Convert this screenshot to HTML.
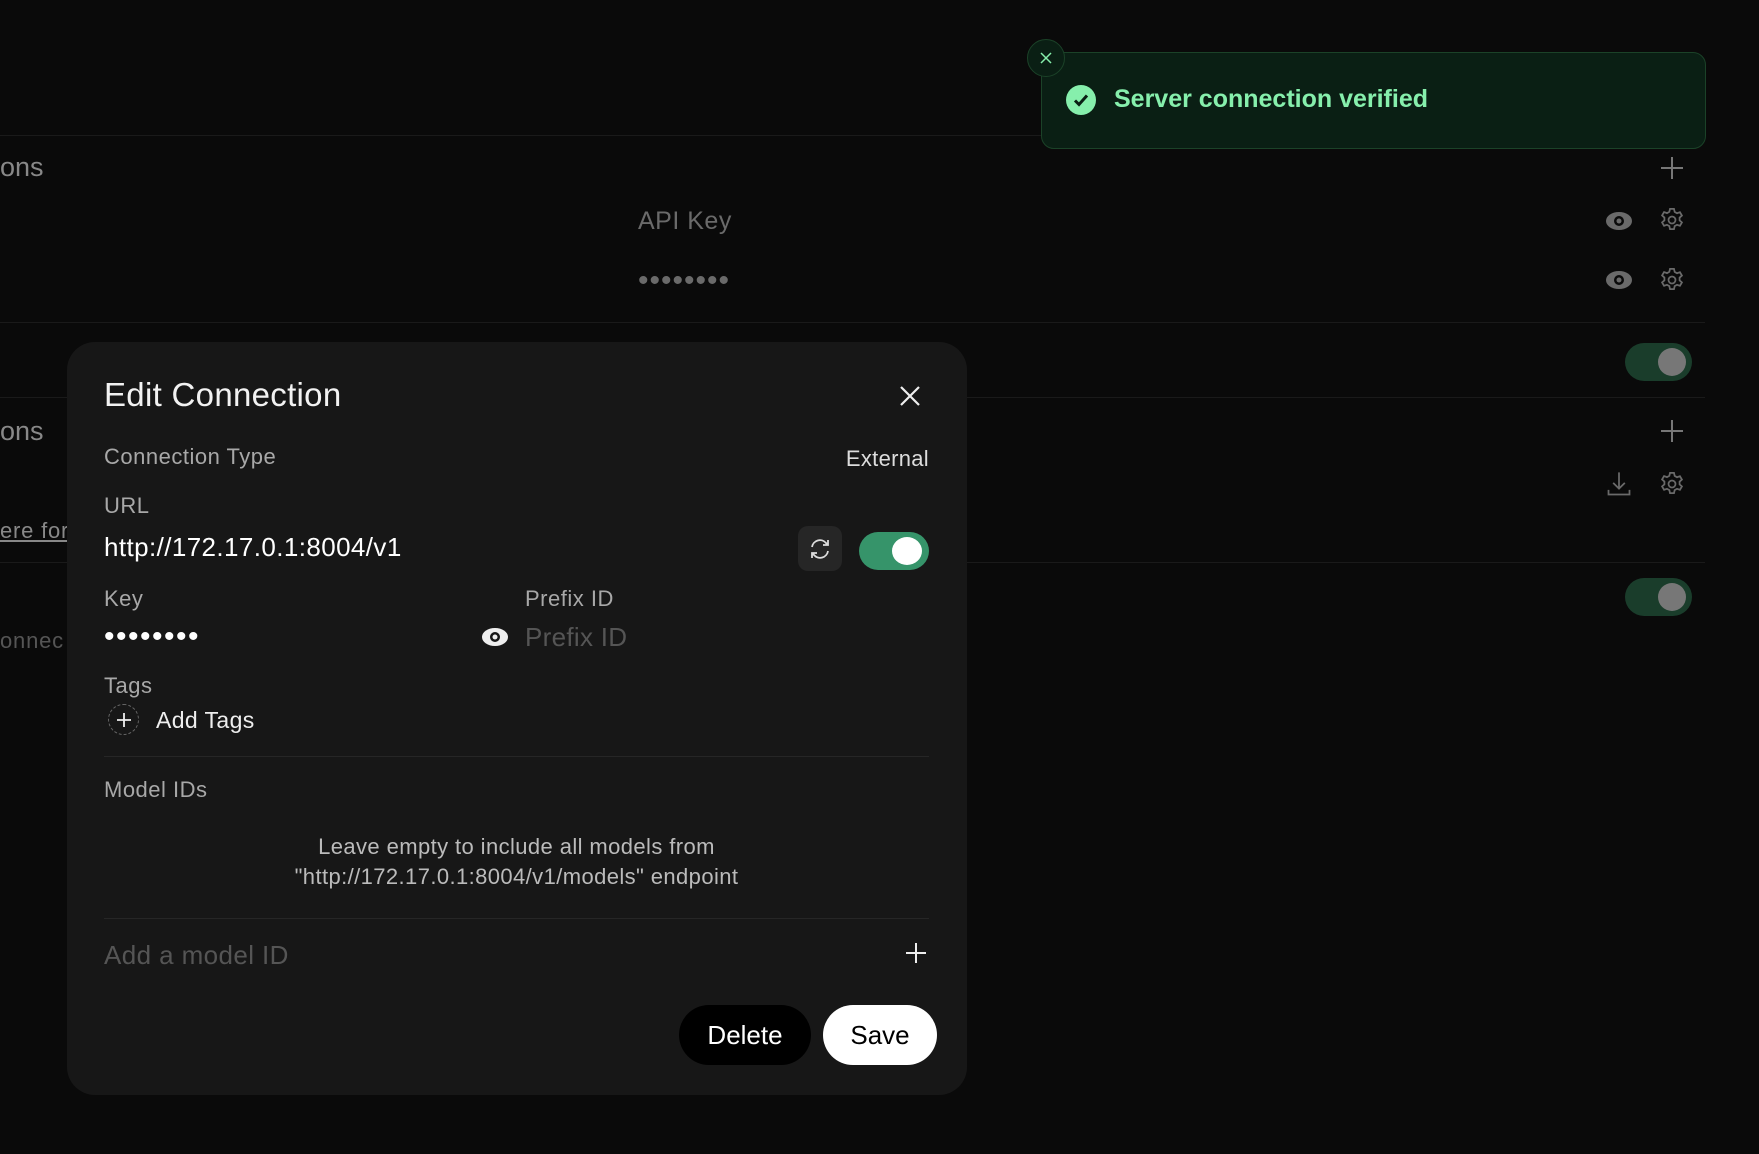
<!DOCTYPE html>
<html><head><meta charset="utf-8"><style>
*{margin:0;padding:0;box-sizing:border-box}
body{width:1759px;height:1154px;background:#0a0a0a;font-family:"Liberation Sans",sans-serif;position:relative;overflow:hidden;color:#fff}
.a{position:absolute;white-space:nowrap}
.line{position:absolute;left:0;width:1705px;height:1px;background:#1a1a1a}
.bg{color:#6a6a6a}
.tg{position:absolute;width:67px;height:38px;border-radius:19px;background:#1a3d2b}
.tg::after{content:"";position:absolute;right:6px;top:5px;width:28px;height:28px;border-radius:50%;background:#777}
.lbl{color:#a8a8a8;font-size:21px;letter-spacing:0.5px}
</style></head><body>
<div class="line" style="top:135px"></div>
<div class="line" style="top:322px"></div>
<div class="line" style="top:397px"></div>
<div class="line" style="top:562px"></div>
<div class="a bg" style="left:0;top:152px;font-size:27px;color:#888">ons</div>
<div class="a bg" style="left:0;top:416px;font-size:27px;color:#888">ons</div>
<div class="a bg" style="left:0;top:518px;font-size:22px;text-decoration:underline;color:#888;letter-spacing:0.8px">ere for</div>
<div class="a bg" style="left:0;top:628px;font-size:22px;color:#555;letter-spacing:0.8px">onnec</div>
<div class="a bg" style="left:638px;top:207px;font-size:25px;letter-spacing:0.5px">API Key</div>
<div class="a bg" style="left:638px;top:266px;font-size:30px;letter-spacing:1px;line-height:30px">••••••••</div>
<svg class="a" style="left:1659px;top:155px" width="26" height="26" viewBox="0 0 26 26" stroke="#777" stroke-width="2"><path d="M13 2v22M2 13h22"/></svg>
<svg class="a" style="left:1659px;top:418px" width="26" height="26" viewBox="0 0 26 26" stroke="#777" stroke-width="2"><path d="M13 2v22M2 13h22"/></svg>
<svg class="a" style="left:1605px;top:209px" width="28" height="24" viewBox="0 0 28 24"><ellipse cx="14" cy="12" rx="13" ry="9" fill="#6a6a6a"/><circle cx="14" cy="12" r="5" fill="#0a0a0a"/><circle cx="14" cy="12" r="2.5" fill="#6a6a6a"/></svg>
<svg class="a" style="left:1605px;top:268px" width="28" height="24" viewBox="0 0 28 24"><ellipse cx="14" cy="12" rx="13" ry="9" fill="#6a6a6a"/><circle cx="14" cy="12" r="5" fill="#0a0a0a"/><circle cx="14" cy="12" r="2.5" fill="#6a6a6a"/></svg>
<svg class="a" style="left:1658px;top:206px" width="28" height="28" viewBox="0 0 24 24" fill="none" stroke="#6a6a6a" stroke-width="1.5"><path d="M10.3 2.5h3.4l.6 2.6 2 1.1 2.5-.9 1.7 2.9-2 1.8v2.3l2 1.8-1.7 2.9-2.5-.9-2 1.1-.6 2.6h-3.4l-.6-2.6-2-1.1-2.5.9-1.7-2.9 2-1.8V9.9l-2-1.8 1.7-2.9 2.5.9 2-1.1z"/><circle cx="12" cy="12" r="3"/></svg>
<svg class="a" style="left:1658px;top:266px" width="28" height="28" viewBox="0 0 24 24" fill="none" stroke="#6a6a6a" stroke-width="1.5"><path d="M10.3 2.5h3.4l.6 2.6 2 1.1 2.5-.9 1.7 2.9-2 1.8v2.3l2 1.8-1.7 2.9-2.5-.9-2 1.1-.6 2.6h-3.4l-.6-2.6-2-1.1-2.5.9-1.7-2.9 2-1.8V9.9l-2-1.8 1.7-2.9 2.5.9 2-1.1z"/><circle cx="12" cy="12" r="3"/></svg>
<svg class="a" style="left:1658px;top:470px" width="28" height="28" viewBox="0 0 24 24" fill="none" stroke="#6a6a6a" stroke-width="1.5"><path d="M10.3 2.5h3.4l.6 2.6 2 1.1 2.5-.9 1.7 2.9-2 1.8v2.3l2 1.8-1.7 2.9-2.5-.9-2 1.1-.6 2.6h-3.4l-.6-2.6-2-1.1-2.5.9-1.7-2.9 2-1.8V9.9l-2-1.8 1.7-2.9 2.5.9 2-1.1z"/><circle cx="12" cy="12" r="3"/></svg>
<svg class="a" style="left:1605px;top:470px" width="28" height="28" viewBox="0 0 24 24" fill="none" stroke="#6a6a6a" stroke-width="1.5"><path d="M12 2v14M7 11l5 5 5-5M3 17v4h18v-4"/></svg>
<div class="tg" style="left:1625px;top:343px"></div>
<div class="tg" style="left:1625px;top:578px"></div>

<div class="a" style="left:1041px;top:52px;width:665px;height:97px;background:#0a1f14;border:1px solid #1b4228;border-radius:13px"></div>
<div class="a" style="left:1027px;top:39px;width:38px;height:38px;border-radius:50%;background:#0a1f14;border:1px solid #1b4228"></div>
<svg class="a" style="left:1038px;top:50px" width="16" height="16" viewBox="0 0 16 16" stroke="#86efac" stroke-width="1.5"><path d="M3 3l10 10M13 3L3 13"/></svg>
<svg class="a" style="left:1066px;top:85px" width="30" height="30" viewBox="0 0 30 30"><circle cx="15" cy="15" r="15" fill="#86efac"/><path d="M9 15.5l4 4 8-9" fill="none" stroke="#0a1f14" stroke-width="3"/></svg>
<div class="a" style="left:1114px;top:85px;font-size:25px;font-weight:bold;color:#86efac">Server connection verified</div>

<div class="a" style="left:67px;top:342px;width:900px;height:753px;background:#171717;border-radius:28px"></div>
<div class="a" style="left:104px;top:376px;font-size:33px;font-weight:500;color:#f2f2f2;letter-spacing:0.3px">Edit Connection</div>
<svg class="a" style="left:898px;top:384px" width="24" height="24" viewBox="0 0 24 24" stroke="#eee" stroke-width="2.2"><path d="M3 3l18 18M21 3L3 21"/></svg>
<div class="a lbl" style="left:104px;top:444px;font-size:22px">Connection Type</div>
<div class="a" style="right:830px;top:446px;font-size:22px;color:#ddd;letter-spacing:0.3px">External</div>
<div class="a lbl" style="left:104px;top:493px;font-size:22px">URL</div>
<div class="a" style="left:104px;top:532px;font-size:26px;color:#fff;letter-spacing:0.4px">http://172.17.0.1:8004/v1</div>
<div class="a" style="left:798px;top:526px;width:44px;height:45px;border-radius:10px;background:#262626"></div>
<svg class="a" style="left:808px;top:537px" width="24" height="24" viewBox="0 0 24 24" fill="none" stroke="#ddd" stroke-width="1.8"><path d="M4 10a8 8 0 0 1 14-4l2 2M20 3v5h-5M20 14a8 8 0 0 1-14 4l-2-2M4 21v-5h5"/></svg>
<div class="a" style="left:859px;top:532px;width:70px;height:38px;border-radius:19px;background:#36946a"></div>
<div class="a" style="left:892px;top:537px;width:30px;height:28px;border-radius:50%;background:#fff"></div>
<div class="a lbl" style="left:104px;top:586px;font-size:22px">Key</div>
<div class="a lbl" style="left:525px;top:586px;font-size:22px">Prefix ID</div>
<div class="a" style="left:104px;top:622px;font-size:30px;color:#fff;letter-spacing:1.5px;line-height:30px">••••••••</div>
<svg class="a" style="left:481px;top:626px" width="28" height="22" viewBox="0 0 28 22"><ellipse cx="14" cy="11" rx="13" ry="9" fill="#eee"/><circle cx="14" cy="11" r="5" fill="#171717"/><circle cx="14" cy="11" r="2.5" fill="#eee"/></svg>
<div class="a" style="left:525px;top:622px;font-size:26px;color:#555;letter-spacing:0.3px">Prefix ID</div>
<div class="a lbl" style="left:104px;top:673px;font-size:22px">Tags</div>
<div class="a" style="left:108px;top:704px;width:31px;height:31px;border-radius:50%;border:1px dashed #666"></div>
<svg class="a" style="left:116px;top:712px" width="16" height="16" viewBox="0 0 16 16" stroke="#eee" stroke-width="1.8"><path d="M8 1v14M1 8h14"/></svg>
<div class="a" style="left:156px;top:707px;font-size:23px;color:#eee;letter-spacing:0.4px">Add Tags</div>
<div class="a" style="left:104px;top:756px;width:825px;height:1px;background:#262626"></div>
<div class="a lbl" style="left:104px;top:777px;font-size:22px">Model IDs</div>
<div class="a" style="left:104px;top:832px;width:825px;text-align:center;font-size:22px;color:#bbb;line-height:30px;white-space:normal;letter-spacing:0.4px">Leave empty to include all models from<br>"http://172.17.0.1:8004/v1/models" endpoint</div>
<div class="a" style="left:104px;top:918px;width:825px;height:1px;background:#262626"></div>
<div class="a" style="left:104px;top:940px;font-size:26px;color:#555;letter-spacing:0.4px">Add a model ID</div>
<svg class="a" style="left:905px;top:942px" width="22" height="22" viewBox="0 0 22 22" stroke="#eee" stroke-width="2"><path d="M11 1v20M1 11h20"/></svg>
<div class="a" style="left:679px;top:1005px;width:132px;height:60px;border-radius:30px;background:#000;color:#fff;font-size:26px;font-weight:500;text-align:center;line-height:60px">Delete</div>
<div class="a" style="left:823px;top:1005px;width:114px;height:60px;border-radius:30px;background:#fff;color:#000;font-size:26px;font-weight:500;text-align:center;line-height:60px">Save</div>
</body></html>
